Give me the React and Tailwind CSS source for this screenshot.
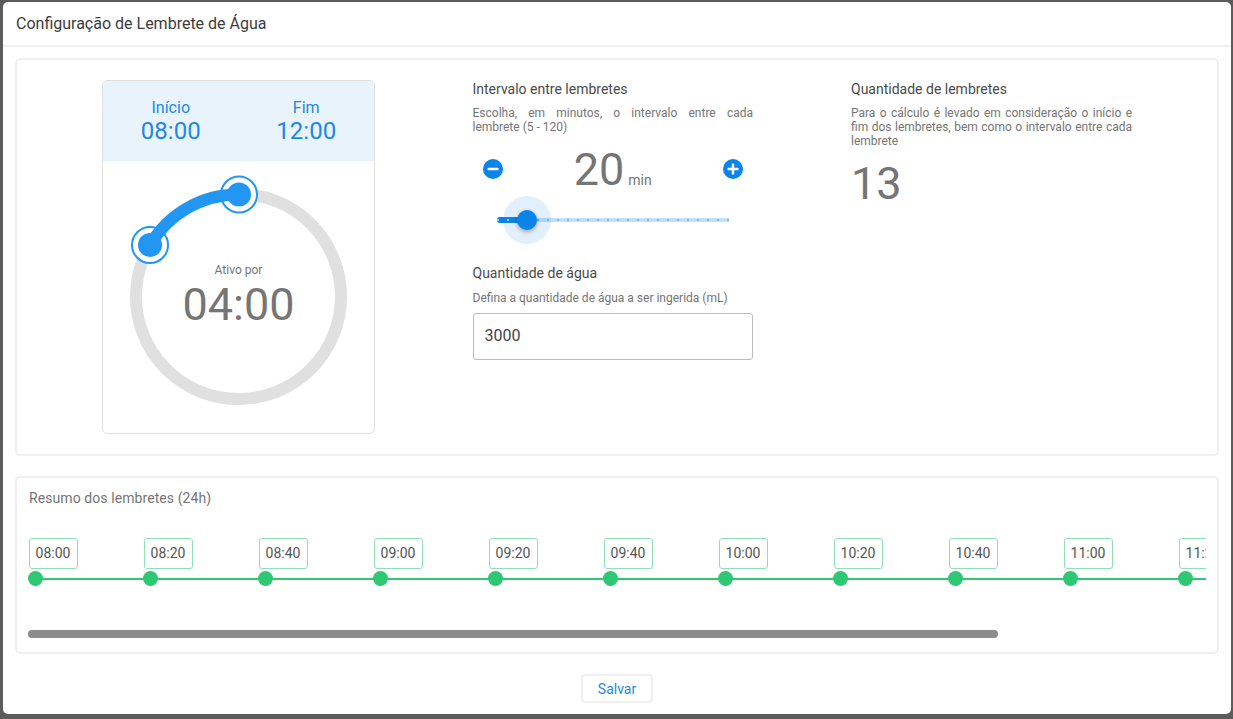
import React from "react";

const times = ["08:00", "08:20", "08:40", "09:00", "09:20", "09:40", "10:00", "10:20", "10:40", "11:00", "11:20", "11:40", "12:00"];
const ticks = Array.from({ length: 24 }, (_, i) => i);

const Dial = () => (
  <svg width="271" height="271" viewBox="0 0 271 271" className="block">
    <circle cx="135.5" cy="135.5" r="102.5" fill="none" stroke="#e0e0e0" strokeWidth="12" />
    <circle cx="47" cy="84" r="18" fill="#fff" stroke="#2196f3" strokeWidth="2" />
    <circle cx="47" cy="84" r="12" fill="#2196f3" />
    <circle cx="136" cy="33.5" r="18" fill="#fff" stroke="#2196f3" strokeWidth="2" />
    <circle cx="136" cy="33.5" r="12" fill="#2196f3" />
    <path d="M47 84 A102.5 102.5 0 0 1 136 33.5" fill="none" stroke="#2196f3" strokeWidth="12" />
  </svg>
);

const RoundButton = ({ plus }) => (
  <svg width="20" height="20" viewBox="0 0 20 20" className="block">
    <circle cx="10" cy="10" r="10" fill="#0a84e8" />
    <rect x="4.5" y="8.8" width="11" height="2.4" rx="0.6" fill="#fff" />
    {plus && <rect x="8.8" y="4.5" width="2.4" height="11" rx="0.6" fill="#fff" />}
  </svg>
);

const Slider = () => (
  <div className="relative ml-[24px] mt-[5px] h-[48px] w-[232px]">
    <div className="absolute left-0 right-0 top-[22px] h-[4px] bg-[#c2e0f9]" />
    <div className="absolute left-0 top-[21px] h-[6px] w-[31px] rounded-l-full bg-[#0a84e8]" />
    <div className="absolute left-[6px] top-0 h-[48px] w-[48px] rounded-full bg-[#0a84e8]/12" />
    {ticks.map((i) => (
      <span
        key={i}
        className={i < 3 ? "absolute top-[23px] h-[2px] w-[2px] rounded-full bg-[#bfe0fb]" : "absolute top-[23px] h-[2px] w-[2px] rounded-full bg-[#5cb0f2]"}
        style={{ left: i * 10 }}
      />
    ))}
    <div className="absolute left-[20px] top-[14px] h-[20px] w-[20px] rounded-full bg-[#0a84e8] shadow-[0_2px_4px_rgba(0,0,0,0.3)]" />
  </div>
);

const TimelineItem = ({ time }) => (
  <div className="w-[115px] shrink-0">
    <div className="flex h-[31px] w-[49px] items-center justify-center rounded-[3px] border border-[#8fe0b6] bg-white text-[14px] text-[#555]">
      {time}
    </div>
    <div className="relative mt-[2px] h-[15px]">
      <div className="absolute left-0 right-0 top-[7px] h-[2px] bg-[#2ec774]" />
      <div className="absolute left-[-0.5px] top-0 h-[15px] w-[15px] rounded-full bg-[#2ec774]" />
    </div>
  </div>
);

export default function App() {
  return (
    <div className="h-[719px] w-[1233px] overflow-hidden bg-[#5c5c5c] pl-[3px] pt-[2px] font-['Roboto',sans-serif]">
      <div className="flex h-[712px] w-[1228px] flex-col rounded-[5px] bg-white">
        <header className="flex h-[45px] shrink-0 items-center border-b-2 border-[#f0f0f0] pl-[13px] text-[16px] text-[#3c3c3c]">
          Configuração de Lembrete de Água
        </header>

        <main className="px-[12px] pt-[11px]">
          <section className="flex h-[398px] rounded-[5px] border-2 border-[#f0f0f0] pl-[85px] pt-[20px]">
            <div className="h-[354px] w-[273px] overflow-hidden rounded-[5px] border border-[#e0e0e0]">
              <div className="flex h-[80px] items-center bg-[#e8f3fc] text-[#1e88e5]">
                <div className="w-[136px] text-center">
                  <div className="text-[16px] leading-[19px]">Início</div>
                  <div className="text-[24px] leading-[28px]">08:00</div>
                </div>
                <div className="w-[136px] text-center">
                  <div className="text-[16px] leading-[19px]">Fim</div>
                  <div className="text-[24px] leading-[28px]">12:00</div>
                </div>
              </div>
              <div className="relative">
                <Dial />
                <div className="absolute left-0 right-0 top-[102px] text-center text-[#757575]">
                  <div className="text-[12px] leading-[14px]">Ativo por</div>
                  <div className="text-[45px] leading-[56px]">04:00</div>
                </div>
              </div>
            </div>

            <div className="ml-[97.5px] w-[280.5px]">
              <h2 className="mt-[1px] text-[14px] leading-[16px] font-normal text-[#4a4a4a]">Intervalo entre lembretes</h2>
              <p className="mt-[9px] text-justify text-[12px] leading-[14px] text-[#757575]">
                Escolha, em minutos, o intervalo entre cada lembrete (5 - 120)
              </p>
              <div className="mt-[13px] flex h-[44px] items-center justify-between px-[10px]">
                <RoundButton />
                <div className="mt-[2px] flex items-baseline text-[#757575]">
                  <span className="text-[45px] leading-[44px]">20</span>
                  <span className="ml-[4px] text-[14px]">min</span>
                </div>
                <RoundButton plus />
              </div>
              <Slider />
              <h2 className="mt-[21px] text-[14px] leading-[16px] font-normal text-[#4a4a4a]">Quantidade de água</h2>
              <p className="mt-[10px] text-[12px] leading-[14px] text-[#757575]">Defina a quantidade de água a ser ingerida (mL)</p>
              <input
                readOnly
                value="3000"
                className="mt-[8px] block h-[47px] w-[280.5px] rounded-[3px] border border-[#bdbdbd] px-[11px] pb-[2px] text-[16px] text-[#444] outline-none"
              />
            </div>

            <div className="ml-[98px] w-[281px]">
              <h2 className="mt-[1px] text-[14px] leading-[16px] font-normal text-[#4a4a4a]">Quantidade de lembretes</h2>
              <p className="mt-[9px] text-justify text-[12px] leading-[14px] text-[#757575]">
                Para o cálculo é levado em consideração o início e fim dos lembretes, bem como o intervalo entre cada lembrete
              </p>
              <div className="mt-[8px] text-[45px] leading-[56px] text-[#757575]">13</div>
            </div>
          </section>

          <section className="mt-[20px] h-[178px] rounded-[5px] border-2 border-[#f0f0f0] pl-[11px] pt-[12px]">
            <h2 className="ml-[1px] text-[14px] leading-[16px] font-normal tracking-[0.08px] text-[#757575]">Resumo dos lembretes (24h)</h2>
            <div className="mt-[32px] w-[1178px] overflow-hidden">
              <div className="ml-[0.5px] flex w-max">
                {times.map((t) => (
                  <TimelineItem key={t} time={t} />
                ))}
              </div>
            </div>
            <div className="mt-[44px] h-[8px] w-[970px] rounded-full bg-[#8c8c8c]" />
          </section>

          <div className="mt-[20px] flex justify-center">
            <button className="h-[29px] w-[72px] rounded-[4px] border-2 border-[#f0f0f0] bg-white pt-[1px] text-[14px] text-[#1e88e5]">Salvar</button>
          </div>
        </main>
      </div>
    </div>
  );
}
